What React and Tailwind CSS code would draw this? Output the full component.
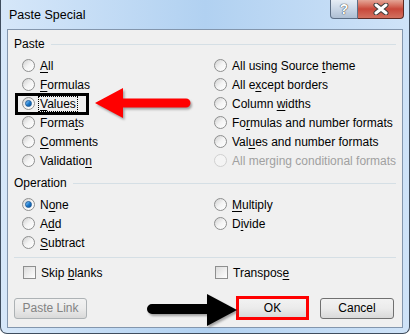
import React from "react";

const font = { fontFamily: '"Liberation Sans", Arial, sans-serif' };

// underline the access-key letter
function Label({ text, k, disabled }) {
  const i = k == null ? -1 : k;
  return (
    <span className={disabled ? "text-[#a0a0a0]" : "text-black"}>
      {i < 0 ? text : (
        <>
          {text.slice(0, i)}
          <span className="underline underline-offset-2">{text[i]}</span>
          {text.slice(i + 1)}
        </>
      )}
    </span>
  );
}

function Radio({ checked, disabled }) {
  return (
    <span
      className={
        "relative w-[13px] h-[13px] rounded-full border flex items-center justify-center shrink-0 " +
        (disabled
          ? "border-[#d0d0d0] bg-[#f4f4f4]"
          : "border-[#8e8f8f] bg-gradient-to-br from-[#d0d0d0] via-[#f4f4f4] to-white")
      }
    >
      {checked && (
        <span className="w-[7px] h-[7px] rounded-full bg-gradient-to-br from-[#8fd0ff] via-[#1f7fd0] to-[#0a4a92] border border-[#1a5a9a]" />
      )}
    </span>
  );
}

function Check() {
  return (
    <span className="w-[13px] h-[13px] border border-[#8e8f8f] bg-gradient-to-br from-[#dcdcdc] to-white shrink-0" />
  );
}

function Row({ children }) {
  return <div className="h-[19px] flex items-center gap-[5px]">{children}</div>;
}

function GroupLabel({ text, k }) {
  return (
    <div className="h-4 flex items-center gap-[6px] pl-[6px] pr-[6px]">
      <Label text={text} k={k} />
      <div className="flex-1 h-px bg-[#d5dfe5]" />
    </div>
  );
}

const pasteLeft = [
  ["All", 0],
  ["Formulas", 0],
  ["Values", 0, true],
  ["Formats", 5],
  ["Comments", 0],
  ["Validation", 9],
];
const pasteRight = [
  ["All using Source theme", 17],
  ["All except borders", 5],
  ["Column widths", 7],
  ["Formulas and number formats", 2],
  ["Values and number formats", 3],
  ["All merging conditional formats", -1, false, true],
];

function Btn({ children, disabled, w, cls }) {
  return (
    <div
      className={
        "rounded-[3px] border flex items-center justify-center bg-gradient-to-b from-[#f2f2f2] via-[#ebebeb] to-[#d9d9d9] " +
        (disabled ? "border-[#adb2b5] text-[#838383]" : "border-[#707070] text-black") +
        " " + w + " " + (cls || "h-[21px]")
      }
    >
      {children}
    </div>
  );
}

export default function App() {
  return (
    <div className="w-[412px] h-[336px] bg-white relative overflow-hidden text-[12px] leading-none" style={font}>
      {/* window frame */}
      <div className="w-[410px] h-[334px] border-x border-b border-[#3f4d5e] rounded-b-[7px] bg-gradient-to-r from-[#d6e7f9] via-[#b1d1f1] to-[#cfe3f8] flex flex-col">
        {/* title bar */}
        <div className="h-[29px] flex items-start relative">
          <div className="pl-[8px] pt-[9px] text-black text-[12.5px]">Paste Special</div>
          <div className="ml-auto mr-[5px] flex">
            <div className="w-[28px] h-[19px] border border-[#5d6f86] border-t-0 rounded-bl-[4px] bg-gradient-to-b from-[#e6edf5] via-[#c9d6e6] to-[#aebfd3] flex items-center justify-center text-white font-bold text-[14px]" style={{ textShadow: "0 0 1px #333, 0 0 1px #333" }}>
              ?
            </div>
            <div className="w-[46px] h-[19px] border border-[#5d2a24] border-t-0 border-l-0 rounded-br-[4px] bg-gradient-to-b from-[#e4a597] via-[#c8473a] to-[#d2705f] flex items-center justify-center">
              <svg width="16" height="12" viewBox="0 0 16 12">
                <path d="M3 2 L13 10 M13 2 L3 10" stroke="#3a3a3a" strokeWidth="5" strokeLinecap="round" />
                <path d="M3 2 L13 10 M13 2 L3 10" stroke="#fff" strokeWidth="3" strokeLinecap="round" />
              </svg>
            </div>
          </div>
        </div>

        {/* client area */}
        <div className="mx-[6px] h-[299px] bg-[#f0f0f0] border border-[#8396ad] flex flex-col">
          <div className="pt-[6px]">
            <GroupLabel text="Paste" />
          </div>
          <div className="mt-1 grid grid-cols-[192px_1fr] pl-[14px]">
            <div>
              {pasteLeft.map(([t, k, c]) => (
                <Row key={t}>
                  <Radio checked={c} />
                  <Label text={t} k={k} />
                </Row>
              ))}
            </div>
            <div>
              {pasteRight.map(([t, k, c, d]) => (
                <Row key={t}>
                  <Radio checked={c} disabled={d} />
                  <Label text={t} k={k} disabled={d} />
                </Row>
              ))}
            </div>
          </div>

          <div className="mt-[5px]">
            <GroupLabel text="Operation" />
          </div>
          <div className="mt-1 grid grid-cols-[192px_1fr] pl-[14px]">
            <div>
              <Row><Radio checked /><Label text="None" k={1} /></Row>
              <Row><Radio /><Label text="Add" k={1} /></Row>
              <Row><Radio /><Label text="Subtract" k={0} /></Row>
            </div>
            <div>
              <Row><Radio /><Label text="Multiply" k={0} /></Row>
              <Row><Radio /><Label text="Divide" k={1} /></Row>
            </div>
          </div>

          <div className="mt-[5px] mx-[6px] h-px bg-[#d5dfe5]" />

          <div className="mt-[5px] grid grid-cols-[192px_1fr] pl-[15px]">
            <Row><Check /><Label text="Skip blanks" k={5} /></Row>
            <Row><Check /><Label text="Transpose" k={8} /></Row>
          </div>

          <div className="mt-[14px] flex items-center pl-[6px] pr-[8px]">
            <Btn disabled w="w-[73px]">Paste Link</Btn>
            <Btn w="w-[73px] ml-auto" cls="h-[24px] border-[3px] !border-[#ff0000] rounded-none">OK</Btn>
            <div className="ml-[11px]">
              <Btn w="w-[74px]">Cancel</Btn>
            </div>
          </div>
        </div>
      </div>

      {/* highlight box around Values */}
      <div className="absolute left-[15px] top-[93px] w-[74px] h-[22px] border-[3px] border-black" />
      <div className="absolute left-[38px] top-[96px] w-[40px] h-[16px] border border-dotted border-black" />

      {/* arrows */}
      <svg className="absolute left-0 top-0" width="412" height="336" viewBox="0 0 412 336">
        <defs>
          <filter id="sh" x="-20%" y="-20%" width="140%" height="160%">
            <feGaussianBlur stdDeviation="1.2" />
          </filter>
        </defs>
        <g transform="translate(1.5,2)" fill="#6b6b6b" opacity="0.6" filter="url(#sh)">
          <path d="M95 103 L123 88 L123 98.5 L186 98.5 A4.5 4.5 0 0 1 186 107.5 L123 107.5 L123 118 Z" />
          <path d="M147 309 A5 5 0 0 1 152 304 L207 304 L207 294 L237 310 L207 326 L207 314 L152 314 A5 5 0 0 1 147 309 Z" />
        </g>
        <path d="M95 103 L123 88 L123 98.5 L186 98.5 A4.5 4.5 0 0 1 186 107.5 L123 107.5 L123 118 Z" fill="#ff0000" />
        <path d="M147 309 A5 5 0 0 1 152 304 L207 304 L207 294 L237 310 L207 326 L207 314 L152 314 A5 5 0 0 1 147 309 Z" fill="#000" />
      </svg>
    </div>
  );
}
